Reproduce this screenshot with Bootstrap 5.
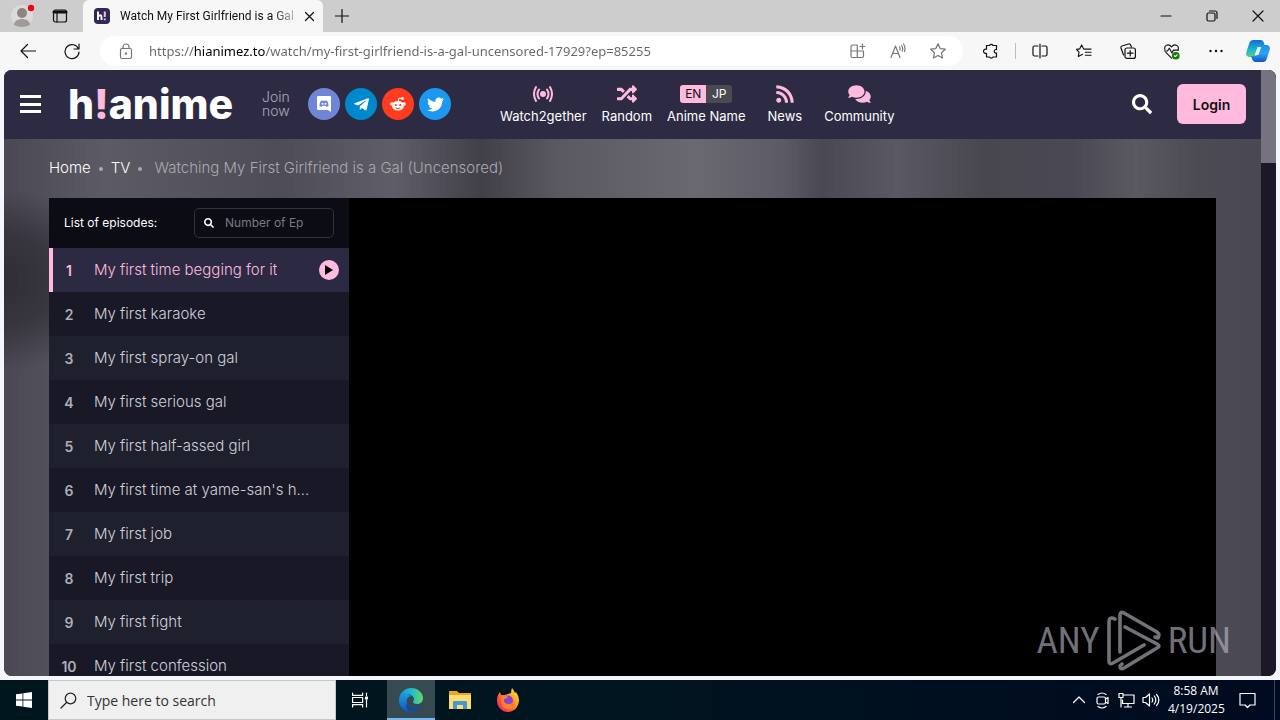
<!DOCTYPE html>
<html lang="en">
<head>
<meta charset="utf-8">
<meta name="viewport" content="width=device-width, initial-scale=1">
<title>Watch My First Girlfriend is a Gal</title>
<link href="https://cdn.jsdelivr.net/npm/bootstrap@5.3.0/dist/css/bootstrap.min.css" rel="stylesheet">
<style>
  :root { --pink: #ffbade; --ui: "Open Sans", "Noto Sans", sans-serif; --site: Inter, "Liberation Sans", sans-serif; }
  body { font-family: var(--ui); background: #f3f6fa; color: #111; }
  button { border: 0; background: none; padding: 0; color: inherit; }
  svg { display: block; flex: none; }
  .line { fill: none; stroke: currentColor; stroke-width: 1.2; stroke-linecap: round; stroke-linejoin: round; }

  /* browser window */
  .titlebar { height: 32px; background: #cdcdcd; }
  .profile-area { width: 83px; padding-left: 10px; gap: 16px; }
  .browser-tab { width: 240px; padding: 0 10px 0 11px; gap: 10px; background: #f7f7f7; border-radius: 6px 6px 0 0; font-size: 12px; }
  .tab-title { font-family: Roboto, sans-serif; -webkit-mask-image: linear-gradient(90deg, #000 88%, rgba(0,0,0,.25)); mask-image: linear-gradient(90deg, #000 88%, rgba(0,0,0,.25)); white-space: nowrap; }
  .window-buttons { gap: 34px; padding-right: 16px; }
  .toolbar { height: 38px; background: #f7f7f7; padding: 0 10px 0 20px; }
  .toolbar .vr { height: 16px; align-self: center; }
  .address { height: 30px; background: #fff; border-radius: 15px; padding: 0 17px; margin: 0 20px; color: #767676; }
  .url-input { border: 0; outline: 0; font-family: "Noto Sans", sans-serif; font-size: 13px; height: 28px; padding: 0; min-width: 0; margin-left: 14px;
    color: transparent; background: linear-gradient(90deg, #666 45px, #000 45px 116px, #666 116px); -webkit-background-clip: text; background-clip: text; }
  .address-icons { gap: 24px; }
  .toolbar-icons { gap: 28px; }
  .copilot { margin-left: 22px; }

  /* site */
  .viewport { min-height: 0; margin: 0 4px 4px; border-radius: 8px; overflow: hidden; background: #1b1828; }
  .site { font-family: var(--site); min-width: 0; overflow: hidden; background:
      radial-gradient(ellipse 110px 90px at 0 210px, rgba(46,44,53,.95), rgba(46,44,53,.7) 50%, transparent),
      linear-gradient(90deg, #4a4852, #5c5a64 8%, #4e4c56 22%, #5f5d67 31%, #413f48 38%, #5a5962 44%, #6a6871 55%, #5c5a64 62%, #4a4852 65%, #5a5862 71%, #484750 78%, #4a4852 85%, #5a5962 90%, #4c4b54 95%, #4a4852); }
  .site-header { height: 69px; background: #2d2b44; color: #fff; padding: 0 15px 1px 16px; }
  .site-logo { font-size: 41px; font-weight: 800; line-height: 1; width: 169px; margin-left: 26px; color: #fff; text-decoration: none; white-space: nowrap; }
  .site-logo span { color: var(--pink); }
  .join-now { width: 46px; margin-left: 25px; font-size: 14px; font-weight: 300; line-height: 14px; color: #aaa9b8; }
  .socials { gap: 5px; }
  .social { width: 32px; height: 32px; border-radius: 50%; color: #fff; background: #6f85d5; }
  .social.telegram { background: #08c; }
  .social.reddit { background: #ff3c1f; }
  .social.twitter { background: #1d98f0; }
  .site-menu { margin-left: 49px; gap: 15px; }
  .site-menu a, .site-menu div { color: #fff; text-decoration: none; font-size: 13px; line-height: 18px; }
  .menu-symbol { height: 20px; margin-bottom: 3px; color: var(--pink); display: flex; align-items: center; justify-content: center; }
  .site-menu .news-link { padding: 0 7px; }
  .lang button { height: 18px; width: 26px; font-size: 12px; line-height: 18px; background: #4a4b51; color: #fff; border-radius: 0 3px 3px 0; }
  .lang button:first-child { background: var(--pink); color: #111; border-radius: 3px 0 0 3px; }
  .login { width: 69px; height: 40px; background: var(--pink); color: #111; border-radius: 6px; font-size: 14px; font-weight: 600; margin-left: 25px; }
  .crumbs { height: 59px; padding: 0 45px; font-size: 15px; font-weight: 300; color: #aaa9af; }
  .crumbs a { color: #fff; text-decoration: none; }
  .crumbs li + li::before { content: ""; display: inline-block; width: 4px; height: 4px; border-radius: 50%; background: #aaa9af; margin: 0 8px; vertical-align: middle; }
  .crumbs li:last-child::before { margin-right: 12px; }
  .watch { margin: 0 45px; background: #000; min-height: 480px; }
  .episodes { width: 300px; background: #191826; flex: none; }
  .episodes-head { height: 50px; background: #0b0c14; color: #fff; padding: 0 15px; font-size: 12px; }
  .episode-find { width: 140px; height: 30px; border: 1px solid #32333c; border-radius: 5px; padding: 0 9px; gap: 11px; }
  .episode-find input { border: 0; outline: 0; background: none; padding: 0; width: 100px; font-size: 12px; color: #fff; }
  .episode-find input::placeholder { color: #797a82; opacity: 1; }
  .episode { height: 44px; padding: 0 10px 0 0; border-left: 4px solid transparent; background-clip: border-box; color: #d0d0d8; text-decoration: none; font-size: 15px; font-weight: 300; }
  .episode:nth-child(odd) { background-color: #1f202e; }
  .episode b { width: 32px; margin-right: 9px; text-align: center; font-weight: 600; font-size: 14px; color: #aeaeb8; }
  .episode .text-truncate { max-width: 214px; }
  .episode.current { background-color: #2b2a42; border-left-color: var(--pink); color: var(--pink); }
  .episode.current b { color: var(--pink); }
  .play-dot { width: 20px; height: 20px; border-radius: 50%; background: var(--pink); color: #111; }
  .scrollbar-track { width: 15px; flex: none; background: #1b1828; }
  .scrollbar-thumb { height: 93px; background: #75737f; }
  .watermark { position: absolute; right: 45px; bottom: 4px; gap: 7px; color: rgba(190,190,200,.6); font-family: "Liberation Sans Narrow", "Roboto Condensed", Roboto, sans-serif; font-size: 37px; line-height: 62px; pointer-events: none; }

  /* desktop taskbar */
  .taskbar { height: 40px; background: linear-gradient(90deg, #00161d, #00141f 50%, #000a20); color: #fff; flex: none; }
  .task-button { width: 48px; display: flex; align-items: center; justify-content: center; }
  .task-button.active { background: #364a52; box-shadow: inset 0 -2px #76b9ed; margin-right: 1px; }
  .task-button.start { margin-right: 0; }
  .task-button.view { margin-right: 3px; }
  .task-search { width: 288px; background: #f0f0f0; border: 1px solid #c8c8c8; color: #222; padding: 0 11px; gap: 10px; }
  .task-search input { border: 0; outline: 0; background: none; min-width: 0; padding: 0; font-size: 14px; }
  .task-search input::placeholder { color: #333; opacity: 1; }
  .tray { gap: 7px; }
  .clock { font-size: 12px; line-height: 18px; width: 56px; margin-left: 1px; white-space: nowrap; }
  .show-desktop { border-left: 1px solid #39455a; width: 6px; margin-left: 18px; }
</style>
</head>
<body class="vh-100 d-flex flex-column overflow-hidden">
<header>
  <div class="titlebar d-flex">
    <div class="profile-area d-flex align-items-center">
      <button type="button" aria-label="Profile"><svg width="26" height="26" viewBox="0 0 26 26"><circle cx="12" cy="13" r="11" fill="#dcdada"/><circle cx="12" cy="10" r="5" fill="#8b8581"/><path d="M4 22c0-8 16-8 16 0q-8 4-16 0z" fill="#a09b97"/><circle cx="21" cy="5" r="3.2" fill="#e00b12"/></svg></button>
      <button type="button" aria-label="Tab actions"><svg class="line" width="16" height="16" viewBox="0 0 16 16"><rect x="1.5" y="2" width="13" height="12" rx="2"/><path d="M2 4h12" stroke-width="3"/><path d="M5 4v10"/></svg></button>
    </div>
    <div class="browser-tab d-flex align-items-center">
      <svg width="16" height="16" viewBox="0 0 16 16"><rect width="16" height="16" rx="4" fill="#2d2b54"/><path d="M4 3.500v8.500M4 8.500q3.500-3 3.500 1v2.500" stroke="#fff" stroke-width="1.900" fill="none"/><path d="M10.800 3.500v5.500M10.800 10.500v1.800" stroke="#ffbade" stroke-width="2"/></svg>
      <div class="tab-title flex-fill">Watch My First Girlfriend is a Gal</div>
      <button type="button" aria-label="Close tab"><svg class="line" width="11" height="11" viewBox="0 0 11 11"><path d="M1.500 1.500l8 8M9.500 1.500l-8 8"/></svg></button>
    </div>
    <button type="button" aria-label="New tab" class="ms-2 ps-1"><svg class="line" width="14" height="14" viewBox="0 0 14 14"><path d="M7 .5v13M.5 7h13"/></svg></button>
    <div class="window-buttons d-flex align-items-center ms-auto">
      <button type="button" aria-label="Minimize"><svg class="line" width="12" height="12" viewBox="0 0 12 12"><path d="M1 6h10"/></svg></button>
      <button type="button" aria-label="Restore"><svg class="line" width="12" height="12" viewBox="0 0 12 12"><rect x="1" y="3" width="8" height="8" rx="1.500"/><path d="M3.500 1H9q2 0 2 2v5.500"/></svg></button>
      <button type="button" aria-label="Close"><svg class="line" width="12" height="12" viewBox="0 0 12 12"><path d="M1 1l10 10M11 1L1 11"/></svg></button>
    </div>
  </div>
  <div class="toolbar d-flex align-items-center">
    <button type="button" aria-label="Back"><svg class="line" width="16" height="16" viewBox="0 0 16 16"><path d="M15.500 8H1M7.500 1.500L1 8l6.500 6.500"/></svg></button>
    <button type="button" aria-label="Refresh" class="ms-4 ps-1"><svg class="line" width="16" height="18" viewBox="0 0 16 18"><path d="M14.500 7A7 7 0 1 0 15 10M15 2v5h-5"/></svg></button>
    <div class="address flex-fill d-flex align-items-center">
      <svg class="line" width="18" height="18" viewBox="0 0 18 18"><rect x="3.500" y="6.500" width="11" height="10" rx="1.500"/><path d="M6 6.500V5a3 3 0 0 1 6 0v1.500"/><circle cx="9" cy="11.500" r=".6"/></svg>
      <input class="url-input flex-fill" type="text" aria-label="Address" value="https://hianimez.to/watch/my-first-girlfriend-is-a-gal-uncensored-17929?ep=85255">
      <div class="address-icons d-flex">
        <button type="button" aria-label="App available"><svg class="line" width="16" height="16" viewBox="0 0 16 16"><path d="M7.300 2H2.500Q1 2 1 3.500V13q0 1.500 1.500 1.500H12q1.500 0 1.500-1.500V8H1M7.300 2v12.500M12.500 1v5M10 3.500h5"/></svg></button>
        <button type="button" aria-label="Read aloud"><svg class="line" width="16" height="16" viewBox="0 0 16 16"><path d="M1 14.500L5.500 3 10 14.500M2.600 10.500h5.800M9.500 4q1 1.300.3 3M11.500 2.500q2 2.500.7 5.500M13.500 1q2.500 3.500 1 7.500"/></svg></button>
        <button type="button" aria-label="Favorite"><svg class="line" width="16" height="16" viewBox="0 0 16 16"><path d="M8 .8l2.200 4.800 5.100.6-3.800 3.500 1 5.200L8 12.400l-4.500 2.500 1-5.200L.7 6.200l5.100-.6z"/></svg></button>
      </div>
    </div>
    <button type="button" aria-label="Extensions"><svg class="line" width="16" height="16" viewBox="0 0 16 16"><path d="M3.500 2.500h3a2 2 0 0 1 3.500 0h3.500v4h-1a1.900 1.900 0 0 0 0 3.600h1v3.900H10a2 2 0 0 1-3.500 0h-3v-3.700a2.200 2.200 0 1 1 0-4.100z"/></svg></button>
    <div class="vr mx-3"></div>
    <div class="toolbar-icons d-flex align-items-center">
      <button type="button" aria-label="Split screen"><svg class="line" width="16" height="16" viewBox="0 0 16 16"><path d="M6 3H2.500Q1 3 1 4.500v7Q1 13 2.500 13H6M10 3h3.500Q15 3 15 4.500v7q0 1.500-1.500 1.500H10M8 1v14"/></svg></button>
      <button type="button" aria-label="Favorites"><svg class="line" width="16" height="16" viewBox="0 0 17 16"><path d="M9.500 6L8 5.700 6 1.500 4 5.700l-3.500.6L3.200 9.300l-.7 4.500L7 11.500M10 6h6M10 9.300h6M10 12.500h6"/></svg></button>
      <button type="button" aria-label="Collections"><svg class="line" width="16" height="17" viewBox="0 0 16 17"><rect x="5" y="5" width="10.400" height="10.400" rx="2"/><path d="M10.200 7.500v5.500M7.500 10.200h5.500M3.500 12L1 5Q.6 3.400 2 3l6.500-2q1.600-.5 2.200 1.200L11.500 4"/></svg></button>
      <button type="button" aria-label="Browser essentials"><svg class="line" width="16" height="17" viewBox="0 0 17 17"><path d="M1 6.500C-.5 1.500 5 0 8 3.500 11 0 16.500 1.500 15 6.500M2 9.500l6 6M.5 8h3.200l2-3L8.500 10l1.500-3h5.500"/><circle cx="12.500" cy="13" r="3.500" fill="#107c10" stroke="#107c10"/><path d="M11 13l1 1 2-2" stroke="#fff"/></svg></button>
      <button type="button" aria-label="Settings and more"><svg width="16" height="16" viewBox="0 0 16 16"><g fill="currentColor"><circle cx="2.500" cy="8" r="1.200"/><circle cx="8" cy="8" r="1.200"/><circle cx="13.500" cy="8" r="1.200"/></g></svg></button>
    </div>
    <button type="button" aria-label="Copilot" class="copilot"><svg width="24" height="24" viewBox="0 0 24 24"><defs><linearGradient id="cg1" x1="0" y1="0" x2="0" y2="1"><stop stop-color="#1769d6"/><stop offset=".55" stop-color="#18b6d2"/><stop offset="1" stop-color="#5fd07a"/></linearGradient><linearGradient id="cg2" x1="0" y1="0" x2="0" y2="1"><stop stop-color="#1a90e8"/><stop offset=".5" stop-color="#2ea5f5"/><stop offset="1" stop-color="#1253c9"/></linearGradient></defs><path d="M7 1h8q2 0 3 3l1 4h-4q-2 0-3 3l-2 5q-1 2-3 2H3q-4-1-2.500-5.500l3-9Q4.500 1 7 1z" fill="url(#cg1)"/><path d="M17 23H9q-2 0-3-3l-1-3h4q2 0 3-3l2-6q1-2 3-2h4q4 1 2.500 5.500l-3 9Q19.500 23 17 23z" fill="url(#cg2)"/><path d="M11.500 8h3.800l-3 8H8.700z" fill="#eef7ff"/></svg></button>
  </div>
</header>

<div class="viewport d-flex flex-fill position-relative">
  <div class="site flex-fill">
    <header class="site-header d-flex align-items-center">
      <button type="button" aria-label="Menu"><svg width="22" height="20" viewBox="0 0 22 20" fill="#fff"><path d="M0 1h21v3H0zM0 9h21v3H0zM0 16h21v3H0z"/></svg></button>
      <a href="#" class="site-logo">h<span>!</span>anime</a>
      <div class="join-now">Join now</div>
      <nav class="socials d-flex" aria-label="Social">
        <a href="#" aria-label="Discord" class="social d-flex align-items-center justify-content-center"><svg width="16" height="16" viewBox="0 0 16 16"><path d="M2 0h12q1 0 1 1v15l-3-2H2q-1 0-1-1V1q0-1 1-1z" fill="#fff"/><path d="M3.500 10q0-4.500 2-5.500l1.500.3h2l1.500-.3q2 1 2 5.500l-2 1-1-1.200h-3L5.500 11z" fill="#6f85d5"/><circle cx="6.500" cy="7.800" r="1" fill="#fff"/><circle cx="9.500" cy="7.800" r="1" fill="#fff"/></svg></a>
        <a href="#" aria-label="Telegram" class="social telegram d-flex align-items-center justify-content-center"><svg width="15" height="17" viewBox="0 0 448 512" fill="#fff"><path d="M446.700 98.600l-67.600 318.800c-5.100 22.500-18.400 28.100-37.300 17.500l-103-75.900-49.700 47.800c-5.500 5.500-10.100 10.100-20.700 10.100l7.400-104.900 190.900-172.500c8.300-7.400-1.800-11.500-12.900-4.100L117.800 284 16.200 252.200c-22.100-6.900-22.500-22.100 4.600-32.700L418.200 66.400c18.400-6.900 34.500 4.100 28.500 32.200z"/></svg></a>
        <a href="#" aria-label="Reddit" class="social reddit d-flex align-items-center justify-content-center"><svg width="16" height="16" viewBox="0 0 16 16"><ellipse cx="8" cy="9.800" rx="6" ry="4.800" fill="#fff"/><circle cx="2" cy="8" r="1.800" fill="#fff"/><circle cx="14" cy="8" r="1.800" fill="#fff"/><circle cx="12.500" cy="2.500" r="1.400" fill="#fff"/><path d="M8 6l1-4 3 .7" stroke="#fff" fill="none"/><circle cx="5.700" cy="9" r="1.100" fill="#ff3c1f"/><circle cx="10.300" cy="9" r="1.100" fill="#ff3c1f"/><path d="M5.500 11.800q2.500 1.600 5 0" stroke="#ff3c1f" fill="none"/></svg></a>
        <a href="#" aria-label="Twitter" class="social twitter d-flex align-items-center justify-content-center"><svg width="17" height="17" viewBox="0 0 512 512" fill="#fff"><path d="M459.370 151.716c.325 4.548.325 9.097.325 13.645 0 138.720-105.583 298.558-298.558 298.558-59.452 0-114.680-17.219-161.137-47.106 8.447.974 16.568 1.299 25.340 1.299 49.055 0 94.213-16.568 130.274-44.832-46.132-.975-84.792-31.188-98.112-72.772 6.498.974 12.995 1.624 19.818 1.624 9.421 0 18.843-1.300 27.614-3.573-48.081-9.747-84.143-51.980-84.143-102.985v-1.299c13.969 7.797 30.214 12.670 47.431 13.319-28.264-18.843-46.781-51.005-46.781-87.391 0-19.492 5.197-37.360 14.294-52.954 51.655 63.675 129.300 105.258 216.365 109.807-1.624-7.797-2.599-15.918-2.599-24.040 0-57.828 46.782-104.934 104.934-104.934 30.213 0 57.502 12.670 76.670 33.137 23.715-4.548 46.456-13.320 66.599-25.340-7.798 24.366-24.366 44.833-46.132 57.827 21.117-2.273 41.584-8.122 60.426-16.243-14.292 20.791-32.161 39.308-52.628 54.253z"/></svg></a>
      </nav>
      <nav class="site-menu d-flex text-center" aria-label="Main">
        <a href="#"><span class="menu-symbol"><svg width="20" height="18" viewBox="0 0 20 18" fill="none" stroke="currentColor" stroke-width="2" stroke-linecap="round"><circle cx="10" cy="9" r="3" fill="currentColor" stroke="none"/><path d="M6 4.500q-3 4.500 0 9M14 4.500q3 4.500 0 9M3 2q-4 7 0 14M17 2q4 7 0 14"/></svg></span>Watch2gether</a>
        <a href="#"><span class="menu-symbol"><svg width="20" height="20" viewBox="0 0 512 512" fill="currentColor"><path d="M504.971 359.029c9.373 9.373 9.373 24.569 0 33.941l-80 79.984c-15.010 15.010-40.971 4.490-40.971-16.971V416h-58.785a12.004 12.004 0 0 1-8.773-3.812l-70.556-75.596 53.333-57.143L352 336h32v-39.981c0-21.438 25.943-31.998 40.971-16.971l80 79.981zM12 176h84l52.781 56.551 53.333-57.143-70.556-75.596A11.999 11.999 0 0 0 122.785 96H12c-6.627 0-12 5.373-12 12v56c0 6.627 5.373 12 12 12zm372 0v39.984c0 21.460 25.961 31.980 40.971 16.971l80-79.984c9.373-9.373 9.373-24.569 0-33.941l-80-79.981C409.943 24.021 384 34.582 384 56.019V96h-58.785a12.004 12.004 0 0 0-8.773 3.812L96 336H12c-6.627 0-12 5.373-12 12v56c0 6.627 5.373 12 12 12h110.785c3.326 0 6.503-1.381 8.773-3.812L352 176h32z"/></svg></span>Random</a>
        <div><span class="menu-symbol lang"><button type="button">EN</button><button type="button">JP</button></span>Anime Name</div>
        <a href="#" class="news-link"><span class="menu-symbol"><svg width="18" height="20" viewBox="0 0 448 512" fill="currentColor"><path d="M128.081 415.959c0 35.369-28.672 64.041-64.041 64.041S0 451.328 0 415.959s28.672-64.041 64.041-64.041 64.040 28.673 64.040 64.041zm175.660 47.250c-8.354-154.600-132.185-278.587-286.950-286.950C7.656 175.765 0 183.105 0 192.253v48.069c0 8.415 6.490 15.472 14.887 16.018 111.832 7.284 201.473 96.702 208.772 208.772.547 8.397 7.604 14.887 16.018 14.887h48.069c9.149.001 16.489-7.655 15.995-16.790zm144.249.288C439.596 229.677 251.465 40.445 16.503 32.010 7.473 31.686 0 38.981 0 48.016v48.068c0 8.625 6.835 15.645 15.453 15.999 191.179 7.839 344.627 161.316 352.465 352.465.353 8.618 7.373 15.453 15.999 15.453h48.068c9.034-.001 16.329-7.474 16.005-16.504z"/></svg></span>News</a>
        <a href="#"><span class="menu-symbol"><svg width="23" height="20" viewBox="0 0 576 512" fill="currentColor"><path d="M416 192c0-88.400-93.100-160-208-160S0 103.600 0 192c0 34.300 14.100 65.900 38 92-13.400 30.200-35.500 54.200-35.800 54.500-2.200 2.300-2.800 5.700-1.500 8.700S4.800 352 8 352c36.600 0 66.900-12.300 88.700-25 32.200 15.700 70.300 25 111.300 25 114.900 0 208-71.600 208-160zm122 220c23.900-26 38-57.700 38-92 0-66.900-53.500-124.200-129.300-148.100.9 6.600 1.300 13.300 1.300 20.100 0 105.900-107.700 192-240 192-10.800 0-21.300-.8-31.700-1.900C207.800 439.600 281.800 480 368 480c41 0 79.100-9.200 111.300-25 21.800 12.700 52.100 25 88.700 25 3.200 0 6.100-1.900 7.300-4.800 1.300-2.900.7-6.300-1.500-8.700-.3-.3-22.400-24.200-35.800-54.500z"/></svg></span>Community</a>
      </nav>
      <button type="button" aria-label="Search" class="ms-auto"><svg width="20" height="20" viewBox="0 0 512 512" fill="#fff"><path id="lens" d="M505 442.700L405.300 343c-4.500-4.500-10.600-7-17-7H372c27.600-35.300 44-79.700 44-128C416 93.100 322.900 0 208 0S0 93.100 0 208s93.100 208 208 208c48.300 0 92.700-16.400 128-44v16.300c0 6.400 2.500 12.500 7 17l99.700 99.700c9.400 9.400 24.600 9.400 33.900 0l28.300-28.300c9.400-9.400 9.400-24.600.1-34zM208 336c-70.700 0-128-57.200-128-128 0-70.700 57.200-128 128-128 70.700 0 128 57.200 128 128 0 70.700-57.200 128-128 128z"/></svg></button>
      <button type="button" class="login">Login</button>
    </header>
    <nav aria-label="Breadcrumb">
      <ol class="crumbs list-unstyled d-flex align-items-center mb-0">
        <li><a href="#">Home</a></li><li><a href="#">TV</a></li><li>Watching My First Girlfriend is a Gal (Uncensored)</li>
      </ol>
    </nav>
    <main class="watch d-flex">
      <section class="episodes">
        <div class="episodes-head d-flex align-items-center justify-content-between">
          <label for="ep">List of episodes:</label>
          <div class="episode-find d-flex align-items-center">
            <svg width="10" height="10" viewBox="0 0 512 512" fill="#fff"><use href="#lens"/></svg>
            <input id="ep" class="flex-fill" type="text" placeholder="Number of Ep">
          </div>
        </div>
        <div>
          <a href="#" class="episode current d-flex align-items-center"><b>1</b><span class="text-truncate">My first time begging for it</span><span class="play-dot d-flex align-items-center justify-content-center ms-auto"><svg width="8" height="10" viewBox="0 0 8 10"><path d="M0 0l8 5-8 5z"/></svg></span></a>
          <a href="#" class="episode d-flex align-items-center"><b>2</b><span class="text-truncate">My first karaoke</span></a>
          <a href="#" class="episode d-flex align-items-center"><b>3</b><span class="text-truncate">My first spray-on gal</span></a>
          <a href="#" class="episode d-flex align-items-center"><b>4</b><span class="text-truncate">My first serious gal</span></a>
          <a href="#" class="episode d-flex align-items-center"><b>5</b><span class="text-truncate">My first half-assed girl</span></a>
          <a href="#" class="episode d-flex align-items-center"><b>6</b><span class="text-nowrap">My first time at yame-san's h...</span></a>
          <a href="#" class="episode d-flex align-items-center"><b>7</b><span class="text-truncate">My first job</span></a>
          <a href="#" class="episode d-flex align-items-center"><b>8</b><span class="text-truncate">My first trip</span></a>
          <a href="#" class="episode d-flex align-items-center"><b>9</b><span class="text-truncate">My first fight</span></a>
          <a href="#" class="episode d-flex align-items-center"><b>10</b><span class="text-truncate">My first confession</span></a>
        </div>
      </section>
    </main>
  </div>
  <div class="scrollbar-track"><div class="scrollbar-thumb"></div></div>
  <div class="watermark d-flex align-items-center"><span>ANY</span>
    <svg width="54" height="62" viewBox="0 0 54 62" fill="none" stroke="currentColor" stroke-width="3.600" stroke-linejoin="round" stroke-linecap="round"><path d="M13 42V5q0-4 4-2l33 19q3 2 1 6l-3-1M18 17l32 17q4 2 0 4L17 58q-4 2-4-2l2-2M8 9Q2 6 2 12v39q0 4 4 2l31-18"/></svg>
    <span>RUN</span></div>
</div>

<footer class="taskbar d-flex">
  <button type="button" aria-label="Start" class="task-button start"><svg width="16" height="16" viewBox="0 0 16 16" fill="#fff"><path d="M0 2.300l6.500-.9v6.200H0zM7.300 1.300L16 0v7.600H7.300zM0 8.400h6.500v6.200L0 13.700zM7.300 8.400H16V16l-8.700-1.300z"/></svg></button>
  <div class="task-search d-flex align-items-center"><svg class="line" width="17" height="17" viewBox="0 0 17 17"><circle cx="10.500" cy="6.500" r="5.300"/><path d="M6.500 10.500L1 16"/></svg><input type="text" class="flex-fill" aria-label="Search" placeholder="Type here to search"></div>
  <button type="button" aria-label="Task view" class="task-button view"><svg class="line" width="16" height="16" viewBox="0 0 16 16"><path d="M.6 1v2.400h10V1M.6 15v-2.400h10V15M.6 5.500h10v5H.6zM14.500 1v2.500M14.500 8v7"/><rect x="13.500" y="5" width="2" height="2" fill="#fff"/></svg></button>
  <button type="button" aria-label="Edge" class="task-button active"><svg width="24" height="24" viewBox="0 0 24 24"><defs><linearGradient id="eg1"><stop stop-color="#168fd8"/><stop offset=".55" stop-color="#25bcd0"/><stop offset="1" stop-color="#65dc58"/></linearGradient><linearGradient id="eg2" x2="0" y2="1"><stop stop-color="#1b9de2"/><stop offset="1" stop-color="#1452b5"/></linearGradient></defs><path d="M0 11C1 4 6 0 12 0c7 0 12 5 12 10 0 4-3 6-6 6-2 0-4-1-4-2s1-1 1-3c0-3-4-5-7-5-4 0-7 2-8 5z" fill="url(#eg1)"/><path d="M0 11c1-4 5-5 8-5 2 0 3 1 4 2-4 1-5 4-4 7 1 5 7 6 13 3-2 4-6 6-10 6C5 24-1 18 0 11z" fill="url(#eg2)"/><path d="M8 15c1 5 7 6 14 2.500C18 24 12 25 9 22q-3-3-1-7z" fill="#17479c"/></svg></button>
  <button type="button" aria-label="File Explorer" class="task-button"><svg width="22" height="20" viewBox="0 0 22 20"><path d="M0 1h8l2 2h12v4H0z" fill="#e8a91c"/><path d="M0 5h22v14H0z" fill="#ffdb70"/><path d="M4 19v-7q0-1 1-1h12q1 0 1 1v7h-4v-4H8v4z" fill="#3e9bd8"/></svg></button>
  <button type="button" aria-label="Firefox" class="task-button"><svg width="24" height="24" viewBox="0 0 24 24"><defs><linearGradient id="fg" x1="1" y1="0" x2="0" y2="1"><stop stop-color="#fff04a"/><stop offset=".4" stop-color="#ff9a23"/><stop offset=".75" stop-color="#ff3f4a"/><stop offset="1" stop-color="#e0208a"/></linearGradient></defs><path d="M4 4l1 3 3 .3L15 5q0-3 1-5 2 2 3 5l1-1q3 4 3 8c0 7-5 12-11 12S1 19 1 13q0-6 3-9z" fill="url(#fg)"/><circle cx="12" cy="12.500" r="5" fill="#8245d8"/><path d="M5 8q4-2 7 1-1 2-4 2-1 5 5 5 4 0 5-4 2 7-4 9-7 1-9-5z" fill="#ff8027"/></svg></button>
  <div class="tray d-flex align-items-center ms-auto">
    <button type="button" aria-label="Hidden icons"><svg class="line" width="16" height="16" viewBox="0 0 16 16"><path d="M2.500 10.500L8 5l5.500 5.500"/></svg></button>
    <button type="button" aria-label="Meet now"><svg class="line" width="17" height="17" viewBox="0 0 17 17"><path d="M4 2.500q4-3 8 0M4 14.500q4 3 8 0M11.500 7l2.500-1.500v6L11.500 10"/><rect x="3" y="5" width="8.500" height="7" rx="1.500"/></svg></button>
    <button type="button" aria-label="Network"><svg class="line" width="17" height="16" viewBox="0 0 17 16"><path d="M5.500 3H16v8.500H4.500V8M10 11.500V15M6.500 15h7M1 1.500h4v4H1zM3 5.500V15"/></svg></button>
    <button type="button" aria-label="Volume"><svg class="line" width="18" height="16" viewBox="0 0 18 16"><path d="M1 5.500h2.500L7.500 2v12l-4-3.500H1zM10 6q1.500 2 0 4M12.300 4q3 4 0 8M14.600 2.500q4.500 5.500 0 11"/></svg></button>
    <div class="clock text-center">8:58 AM<br>4/19/2025</div>
    <button type="button" aria-label="Notifications" class="ms-2"><svg class="line" width="17" height="17" viewBox="0 0 17 17"><path d="M1 1.500h15v11.500h-5L8.500 15.500 6 13H1z"/></svg></button>
  </div>
  <div class="show-desktop"></div>
</footer>
<script src="https://cdn.jsdelivr.net/npm/bootstrap@5.3.0/dist/js/bootstrap.bundle.min.js"></script>
</body>
</html>
